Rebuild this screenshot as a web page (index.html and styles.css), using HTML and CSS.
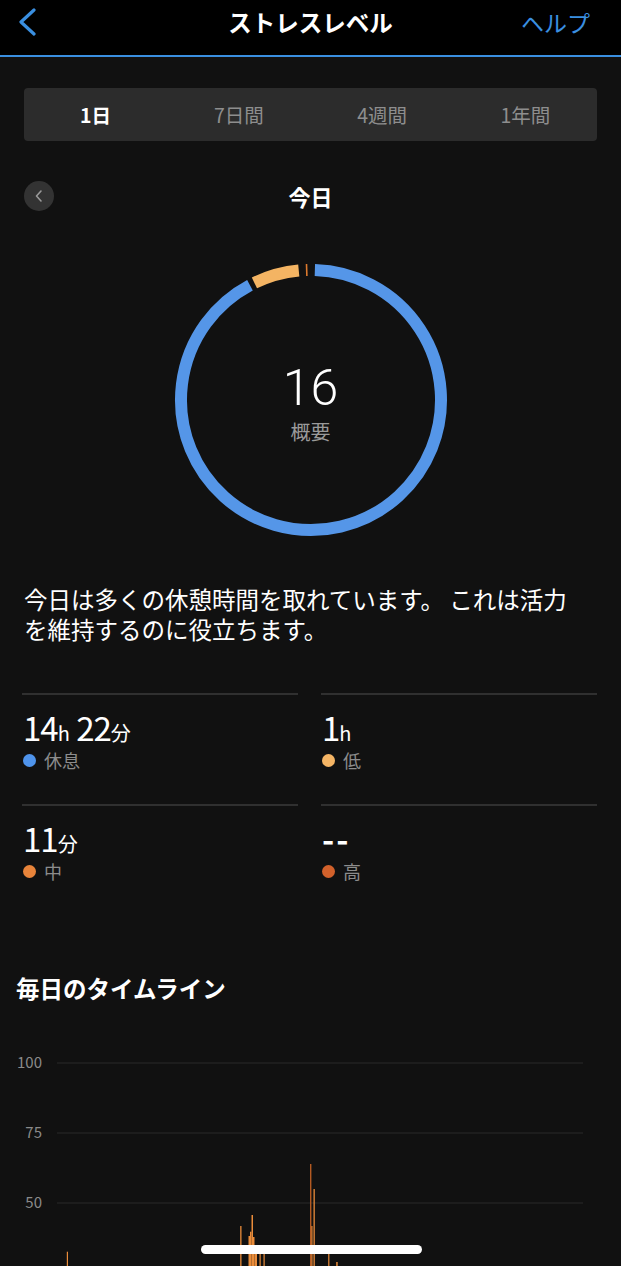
FILE: index.html
```html
<!DOCTYPE html>
<html lang="ja">
<head>
    <meta charset="UTF-8">
    <meta name="viewport" content="width=device-width, initial-scale=1.0">
    <title>ストレスレベル</title>
    <link rel="stylesheet" href="styles.css">
</head>
<body>
    <header class="nav">
        <a class="nav-back" href="#">
            <svg width="20" height="28" viewBox="0 0 20 28"><path d="M17 2 L4 14 L17 26" fill="none" stroke="#3a8fe0" stroke-width="3.2" stroke-linecap="round" stroke-linejoin="round"/></svg>
        </a>
        <h1 class="nav-title">ストレスレベル</h1>
        <a class="nav-help" href="#">ヘルプ</a>
    </header>

    <div class="range-tabs">
        <span class="tab active">1日</span>
        <span class="tab">7日間</span>
        <span class="tab">4週間</span>
        <span class="tab">1年間</span>
    </div>

    <div class="day-nav">
        <button class="day-prev">
            <svg width="10" height="14" viewBox="0 0 10 14"><path d="M7 2 L2.5 7 L7 12" fill="none" stroke="#9a9a9a" stroke-width="1.6" stroke-linecap="round" stroke-linejoin="round"/></svg>
        </button>
        <h2 class="day-title">今日</h2>
        <span></span>
    </div>

    <div class="ring">
        <svg width="280" height="280" viewBox="0 0 280 280">
            <!-- 休息 / 低 / 中 -->
            <path d="M143.86 10.06 A130 130 0 1 1 78.97 25.22" fill="none" stroke="#5596e8" stroke-width="12"/>
            <path d="M83.42 22.96 A130 130 0 0 1 127.77 10.58" fill="none" stroke="#f4b463" stroke-width="12"/>
            <line x1="135.89" y1="16.07" x2="135.49" y2="4.07" stroke="#dd7a2e" stroke-width="1.6"/>
        </svg>
        <div class="ring-center">
            <span class="ring-value">16</span>
            <span class="ring-label">概要</span>
        </div>
    </div>

    <p class="summary">今日は多くの休憩時間を取れています。 これは活力を維持するのに役立ちます。</p>

    <div class="stats">
        <div class="stat">
            <div class="stat-value">14<small>h</small> 22<small>分</small></div>
            <div class="stat-label"><i class="dot rest"></i>休息</div>
        </div>
        <div class="stat">
            <div class="stat-value">1<small>h</small></div>
            <div class="stat-label"><i class="dot low"></i>低</div>
        </div>
        <div class="stat">
            <div class="stat-value">11<small>分</small></div>
            <div class="stat-label"><i class="dot medium"></i>中</div>
        </div>
        <div class="stat">
            <div class="stat-value empty">--</div>
            <div class="stat-label"><i class="dot high"></i>高</div>
        </div>
    </div>

    <h3 class="section-title">毎日のタイムライン</h3>

    <svg class="timeline" width="621" height="320" viewBox="0 0 621 320">
        <g class="grid">
            <line x1="57" y1="23" x2="583" y2="23"/>
            <line x1="57" y1="93" x2="583" y2="93"/>
            <line x1="57" y1="163" x2="583" y2="163"/>
        </g>
        <g class="axis">
            <text x="42" y="28">100</text>
            <text x="42" y="98">75</text>
            <text x="42" y="168">50</text>
        </g>
        <g class="bars">
            <rect x="66.8" y="211.7" width="1.2" height="100"/>
            <rect x="240.2" y="186" width="1.3" height="130"/>
            <rect x="248.5" y="196" width="1.5" height="120"/>
            <rect x="250" y="191.7" width="1.5" height="125"/>
            <rect x="251.5" y="175" width="1.5" height="140"/>
            <rect x="253" y="197" width="1.5" height="120"/>
            <rect x="254.5" y="205" width="1.5" height="110"/>
            <rect x="256" y="210" width="1" height="110"/>
            <rect x="259.5" y="213" width="1.2" height="100"/>
            <rect x="263.5" y="214" width="1.2" height="100"/>
            <rect x="311.2" y="186" width="1.3" height="130"/>
            <rect x="313.5" y="149" width="1.3" height="170"/>
            <rect x="328.2" y="214" width="1.2" height="100"/>
            <rect x="336.2" y="222" width="1.5" height="100"/>
            <rect class="dark" x="310" y="124" width="1.4" height="200"/>
        </g>
    </svg>

    <div class="home-indicator"></div>
</body>
</html>
```

FILE: styles.css
```css
body {
    margin: 0;
    background-color: #111111;
    color: #ffffff;
    font-family: "Noto Sans CJK JP", "Noto Sans", sans-serif;
}
a {
    text-decoration: none;
}
.nav {
    display: grid;
    grid-template-columns: 1fr auto 1fr;
    align-items: start;
    height: 57px;
    box-sizing: border-box;
    padding: 7px 24px 0;
    background-color: #000000;
    border-bottom: 2px solid #3a8fe0;
}
.nav-back svg {
    display: block;
    margin: 1px 0 0 -7px;
}
.nav-title {
    margin: 0;
    font-size: 23.5px;
    font-weight: 700;
    line-height: 30px;
}
.nav-help {
    justify-self: end;
    margin-right: 7px;
    color: #3a8fe0;
    font-size: 23px;
    line-height: 30px;
}
.range-tabs {
    display: grid;
    grid-template-columns: repeat(4, 1fr);
    height: 53px;
    margin: 31px 24px 0;
    background-color: #2c2c2c;
    border-radius: 4px;
}
.tab {
    display: flex;
    align-items: center;
    justify-content: center;
    font-size: 19.5px;
    color: #8e8e8e;
}
.tab.active {
    color: #ffffff;
    font-weight: 700;
}
.day-nav {
    display: grid;
    grid-template-columns: 30px 1fr 30px;
    align-items: center;
    margin-top: 40px;
    padding: 0 24px;
}
.day-prev {
    display: flex;
    align-items: center;
    justify-content: center;
    width: 30px;
    height: 30px;
    padding: 0;
    border: none;
    border-radius: 50%;
    background-color: #333333;
}
.day-title {
    margin: 0;
    text-align: center;
    font-size: 22px;
    font-weight: 700;
    line-height: 30px;
}
.ring {
    display: grid;
    justify-content: center;
    margin-top: 49px;
}
.ring svg,
.ring-center {
    grid-area: 1 / 1;
}
.ring svg {
    display: block;
}
.ring-center {
    display: flex;
    flex-direction: column;
    align-items: center;
    justify-content: center;
    padding-top: 8px;
}
.ring-value {
    font-family: Roboto, "Noto Sans", sans-serif;
    font-size: 50px;
    font-weight: 300;
    line-height: 50px;
}
.ring-label {
    margin-top: 6px;
    font-size: 20px;
    line-height: 26px;
    color: #9a9a9a;
}
.summary {
    margin: 44px 0 0;
    padding: 0 44px 0 24px;
    font-size: 23.5px;
    line-height: 30px;
}
.stats {
    display: grid;
    grid-template-columns: 1fr 1fr;
    column-gap: 23px;
    margin-top: 49px;
    padding: 0 24px 0 22px;
}
.stat {
    height: 111px;
    box-sizing: border-box;
    padding: 13px 0 0 1px;
    border-top: 2px solid #303030;
}
.stat-value {
    font-size: 33px;
    line-height: 38px;
    letter-spacing: -1px;
}
.stat-value small {
    font-size: 20px;
    line-height: 1;
    letter-spacing: 0;
}
.stat-value.empty {
    font-weight: 700;
    letter-spacing: 2px;
}
.stat-label {
    display: flex;
    align-items: center;
    gap: 8px;
    font-size: 18px;
    line-height: 28px;
    color: #8c8c8c;
}
.dot {
    width: 13px;
    height: 13px;
    border-radius: 50%;
}
.dot.rest {
    background-color: #4f94ec;
}
.dot.low {
    background-color: #f5b565;
}
.dot.medium {
    background-color: #e8843a;
}
.dot.high {
    background-color: #d2612b;
}
.section-title {
    margin: 57px 0 0;
    padding-left: 16px;
    font-size: 23.5px;
    font-weight: 700;
    line-height: 32px;
}
.timeline {
    display: block;
    margin-top: 36px;
}
.grid line {
    stroke: #2a2a2a;
    stroke-width: 1.2;
}
.axis text {
    fill: #8a8a8a;
    font-size: 15px;
    text-anchor: end;
}
.bars rect {
    fill: #ea8c3a;
}
.bars rect.dark {
    fill: #b35a22;
}
.home-indicator {
    position: fixed;
    left: 50%;
    bottom: 12px;
    width: 221px;
    height: 9px;
    margin-left: -110px;
    border-radius: 5px;
    background-color: #ffffff;
}
```
